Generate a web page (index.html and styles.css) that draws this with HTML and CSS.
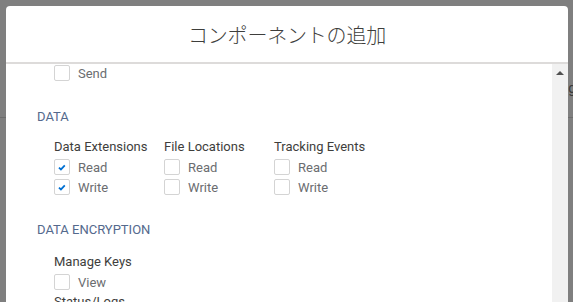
FILE: index.html
```html
<!DOCTYPE html>
<html lang="ja">
<head>
    <meta charset="UTF-8">
    <meta name="viewport" content="width=device-width, initial-scale=1.0">
    <title>コンポーネントの追加</title>
    <link rel="stylesheet" href="styles.css">
</head>

<body>
    <div class="page-behind">
        <div class="page-top"><span class="page-glyph">g</span></div>
    </div>

    <div class="modal">
        <div class="modal-header">
            <h2 class="modal-title">コンポーネントの追加</h2>
        </div>

        <div class="modal-body">
            <div class="modal-content">
                <div class="perm-group first">
                    <label class="perm-row"><span class="check"></span>Send</label>
                </div>

                <div class="perm-section">
                    <h3 class="perm-heading">DATA</h3>
                    <div class="perm-cols">
                        <div class="perm-group">
                            <div class="perm-title">Data Extensions</div>
                            <label class="perm-row"><span class="check checked"><svg viewBox="0 0 16 16"><path d="M4.5 8.6 L6.8 10.8 L11.2 6.2" /></svg></span>Read</label>
                            <label class="perm-row"><span class="check checked"><svg viewBox="0 0 16 16"><path d="M4.5 8.6 L6.8 10.8 L11.2 6.2" /></svg></span>Write</label>
                        </div>
                        <div class="perm-group">
                            <div class="perm-title">File Locations</div>
                            <label class="perm-row"><span class="check"></span>Read</label>
                            <label class="perm-row"><span class="check"></span>Write</label>
                        </div>
                        <div class="perm-group">
                            <div class="perm-title">Tracking Events</div>
                            <label class="perm-row"><span class="check"></span>Read</label>
                            <label class="perm-row"><span class="check"></span>Write</label>
                        </div>
                    </div>
                </div>

                <div class="perm-section">
                    <h3 class="perm-heading">DATA ENCRYPTION</h3>
                    <div class="perm-group wide">
                        <div class="perm-title">Manage Keys</div>
                        <label class="perm-row"><span class="check"></span>View</label>
                        <div class="perm-title">Status/Logs</div>
                    </div>
                </div>
            </div>

            <div class="scrollbar">
                <div class="scroll-up"></div>
            </div>
        </div>
    </div>
</body>
</html>
```

FILE: styles.css
```css
html, body {
  margin: 0;
  height: 100%;
  overflow: hidden;
}

body {
  background-color: #7f7f7f;
  font-family: Roboto, "Liberation Sans", Arial, sans-serif;
}

.page-top {
  height: 117px;
  border-bottom: 1px solid #6d6d6d;
  text-align: right;
}

.page-glyph {
  display: inline-block;
  margin-top: 80px;
  margin-right: -3px;
  font-size: 14px;
  color: #3a3a3a;
}

/* modal over the dimmed page */
.modal {
  position: absolute;
  top: 6px;
  left: 6px;
  right: 5px;
  bottom: -40px;
  display: flex;
  flex-direction: column;
  background-color: #fff;
  border-radius: 4px 4px 0 0;
}

.modal-header {
  height: 56px;
  display: flex;
  align-items: center;
  justify-content: center;
  border-bottom: 2px solid #dddbda;
}

.modal-title {
  margin: 0;
  font-family: "Noto Sans CJK JP", sans-serif;
  font-size: 20px;
  font-weight: 300;
  color: #3e3e3c;
  letter-spacing: -0.2px;
}

.modal-body {
  flex: 1;
  display: flex;
}

.modal-content {
  flex: 1;
  padding: 0 0 0 31px;
}

.scrollbar {
  width: 16px;
  background-color: #f1f1f1;
}

.scroll-up {
  width: 0;
  height: 0;
  margin: 7px auto 0;
  border-left: 4px solid transparent;
  border-right: 4px solid transparent;
  border-bottom: 4px solid #505050;
}

.perm-section {
  margin-top: 23px;
}

.perm-group.first {
  margin-top: -1px;
}

.perm-group.first + .perm-section {
  margin-top: 24px;
}

.perm-heading {
  margin: 0 0 10px;
  font-size: 13px;
  font-weight: 400;
  line-height: 20px;
  color: #54698d;
}

.perm-cols {
  display: grid;
  grid-template-columns: 110px 110px 110px;
  margin-left: 17px;
}

.perm-group {
  margin-left: 17px;
}

.perm-cols .perm-group {
  margin-left: 0;
}

.perm-group.wide {
  margin-top: 12px;
}

.perm-title {
  font-size: 13px;
  line-height: 20px;
  color: #3e3e3c;
}

.perm-row {
  display: flex;
  align-items: center;
  height: 20px;
  font-size: 13px;
  color: #6b6d70;
}

.check {
  box-sizing: border-box;
  width: 16px;
  height: 16px;
  margin-right: 8px;
  border: 1px solid #d4d4d4;
  border-radius: 2px;
  background-color: #fff;
}

.check svg {
  display: block;
  width: 14px;
  height: 14px;
  fill: none;
  stroke: #0070d2;
  stroke-width: 2;
}
```
